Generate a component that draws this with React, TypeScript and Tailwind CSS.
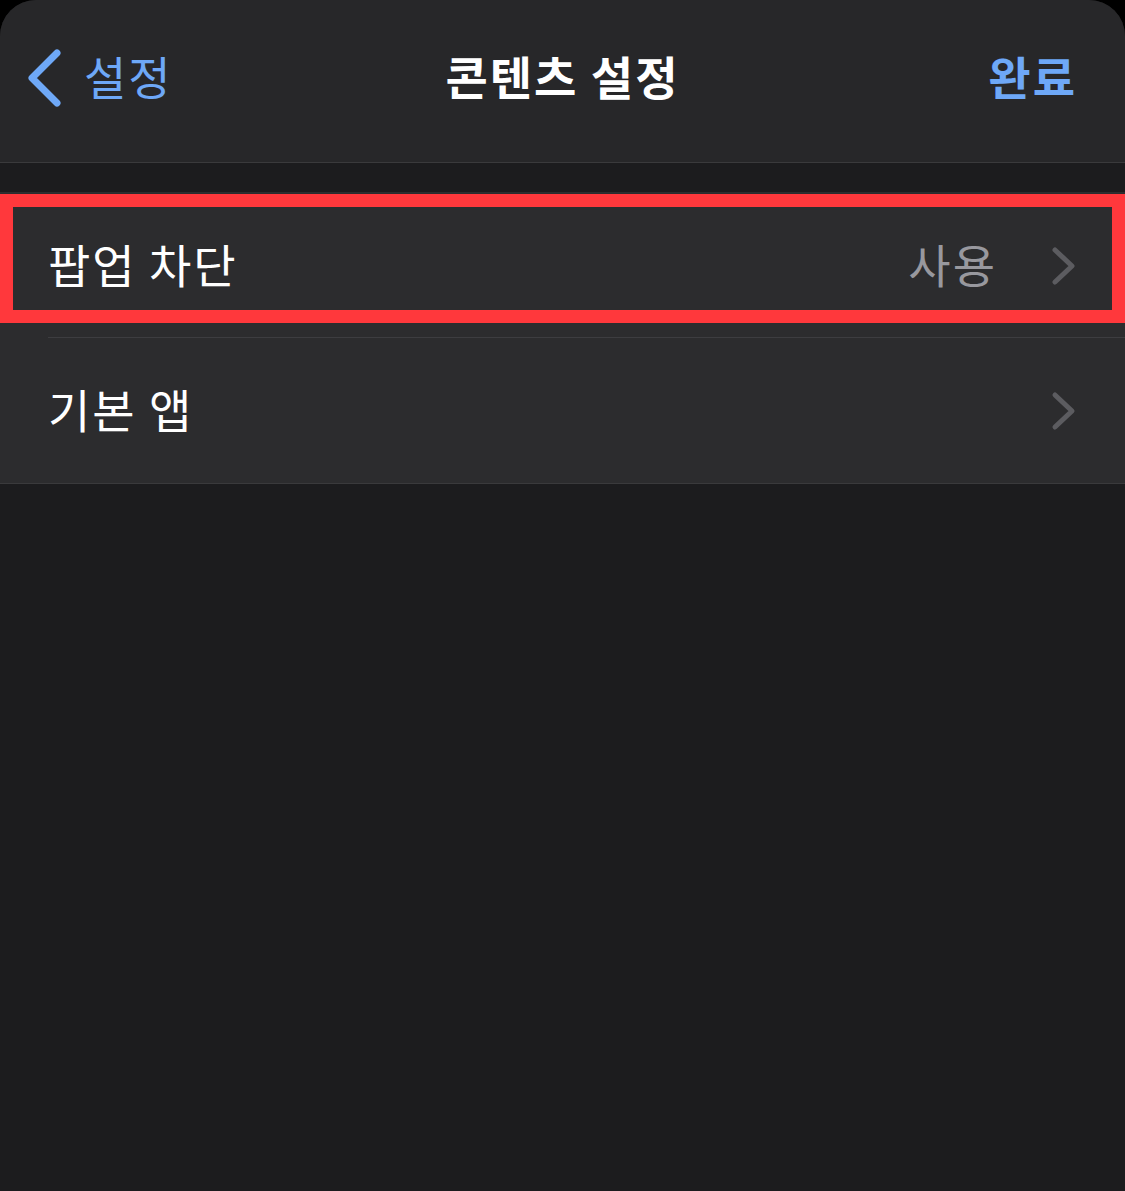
import React from "react";

const font = { fontFamily: '"Noto Sans CJK KR", "Noto Sans", sans-serif' };

function Chevron({ className }: { className?: string }) {
  return (
    <svg width="26" height="40" viewBox="0 0 26 40" className={className} fill="none">
      <path d="M4 4 L21 20 L4 36" stroke="currentColor" strokeWidth="5" strokeLinecap="round" strokeLinejoin="round" />
    </svg>
  );
}

function Row({ label, value, divider }: { label: string; value?: string; divider?: boolean }) {
  return (
    <div className="relative h-[145px] bg-[#2c2c2e]">
      <div className="flex h-full items-center pl-12 pr-[48px]">
        <span className="flex-1 pb-[5px] text-[46px] leading-none tracking-[2px] text-white">{label}</span>
        {value && <span className="mr-[54px] pb-[5px] text-[46px] leading-none tracking-[2px] text-[#98989e]">{value}</span>}
        <Chevron className="text-[#5c5c60]" />
      </div>
      {divider && <div className="absolute bottom-0 left-12 right-0 h-px bg-[#3d3d40]" />}
    </div>
  );
}

export default function App() {
  return (
    <div className="min-h-[1191px] w-full bg-black" style={font}>
      <div className="min-h-[1191px] overflow-hidden rounded-t-[36px] bg-[#1c1c1e]">
        {/* 네비게이션 바 */}
        <header className="grid h-[163px] grid-cols-[1fr_auto_1fr] items-center border-b border-[#3a3a3c] bg-[#272729] px-[26px] pb-[8px]">
          <div className="flex items-center gap-[20px] text-[#6ea8f7]">
            <svg width="38" height="60" viewBox="0 0 38 60" fill="none">
              <path d="M31 6 L6 31 L31 56" stroke="currentColor" strokeWidth="7" strokeLinecap="round" strokeLinejoin="round" />
            </svg>
            <span className="pb-[4px] text-[46px] leading-none tracking-[2px]">설정</span>
          </div>
          <h1 className="pb-[4px] text-[46px] font-bold leading-none tracking-[2px] text-white">콘텐츠 설정</h1>
          <div className="flex justify-end pr-[22px]">
            <span className="pb-[4px] text-[46px] font-bold leading-none tracking-[2px] text-[#6ea8f7]">완료</span>
          </div>
        </header>

        <div className="h-[30px] border-b border-[#2e2e30]" />

        <div className="border-b border-[#3a3a3c]">
          <div className="relative">
            <Row label="팝업 차단" value="사용" divider />
            {/* 강조 표시 */}
            <div className="pointer-events-none absolute left-0 right-0 top-px h-[129px] border-[13px] border-[#ff383c]" />
          </div>
          <Row label="기본 앱" />
        </div>
      </div>
    </div>
  );
}
